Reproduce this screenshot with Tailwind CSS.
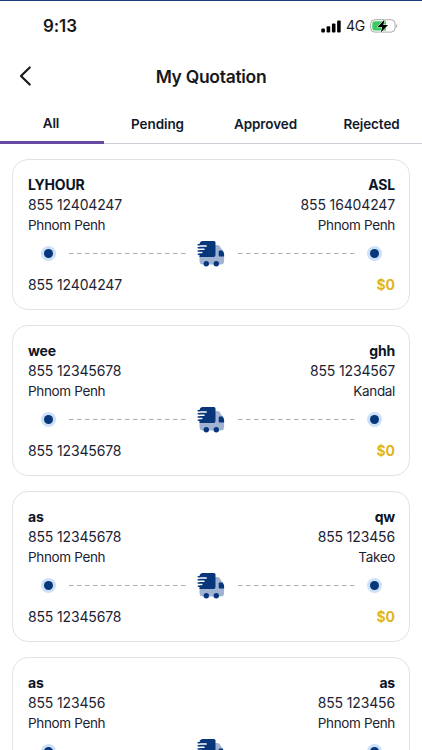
<!DOCTYPE html>
<html lang="en">
  <head>
    <meta charset="UTF-8" />
    <meta name="viewport" content="width=device-width, initial-scale=1.0" />
    <title>My Quotation</title>
    <script src="https://cdn.jsdelivr.net/npm/@tailwindcss/browser@4"></script>
  </head>
  <body
    class="h-[750px] overflow-hidden bg-white font-['Inter',sans-serif] text-[14px] leading-5 text-[#1c2233]"
  >
    <header class="border-t-1 border-[#1f3d7c] text-[#17181c]">
      <!-- status bar -->
      <div class="flex h-[50px] items-center justify-between pr-[24px] pl-[43px]">
        <span class="text-[17px] font-semibold tracking-[-0.1px]">9:13</span>
        <div class="flex items-center">
          <svg class="h-[13px] w-5" viewBox="0 0 20 13" fill="#000">
            <rect x="0.3" y="8.5" width="3.6" height="4" rx="1" />
            <rect x="5.6" y="6.3" width="3.6" height="6.2" rx="1" />
            <rect x="10.9" y="3.6" width="3.6" height="8.9" rx="1" />
            <rect x="16.1" y="0.5" width="3.6" height="12" rx="1" />
          </svg>
          <span class="ml-[5px] text-[14px] tracking-[-0.2px]">4G</span>
          <svg class="ml-[5px] h-[14px] w-7" viewBox="0 0 28 14">
            <rect x="0.7" y="0.7" width="24.4" height="12.4" rx="4" fill="#fff" stroke="#a9a9a9" />
            <path d="M4.5 2.3H16v9.2H4.5a2.2 2.2 0 0 1-2.2-2.2V4.5a2.2 2.2 0 0 1 2.2-2.2z" fill="#3fc965" />
            <path d="M26.2 4.9v4.2c1.5-.8 1.5-3.4 0-4.2z" fill="#a9a9a9" />
            <path d="M14.6.4 7.5 7.9h4.6l-1.2 5.7L18 6h-4.7z" fill="#000" stroke="#fff" stroke-width="1" paint-order="stroke" />
          </svg>
        </div>
      </div>
      <div class="grid h-[50px] grid-cols-[1fr_auto_1fr] items-center px-[18px]">
        <svg class="size-6" viewBox="0 0 24 24" fill="none" stroke="#17181c" stroke-width="2.2" stroke-linecap="round" stroke-linejoin="round">
          <path d="M11.7 3.5 3 12l8.7 8.5" />
        </svg>
        <h1 class="pt-px text-[17.5px] font-semibold tracking-[-0.3px]">My Quotation</h1>
      </div>
    </header>
    <nav
      class="grid h-[43px] grid-cols-[103px_109px_107px_103px] border-b border-[#cfccd6] text-center text-[13.5px] font-semibold tracking-[-0.1px] text-[#121a2b]"
    >
      <a class="-mr-px -mb-px rounded-tr-xs border-b-3 border-[#654aa1] pt-[12px] pr-[2px]">All</a>
      <a class="pt-[13px]">Pending</a>
      <a class="pt-[13px]">Approved</a>
      <a class="pt-[13px] pl-[2px]">Rejected</a>
    </nav>
    <main id="list" class="flex flex-col gap-[15px] px-3 pt-[15px]"></main>

    <svg class="hidden">
      <symbol id="truck" viewBox="0 0 28 28">
        <path d="M2.500 16H18V5h2.200c1.200 0 2.100.5 2.700 1.500l3.400 5.300c.5.800.8 1.600.8 2.500v6.700a3.500 3.500 0 0 1-3.500 3.500H6A3.500 3.500 0 0 1 2.500 21z" fill="#a1b3d3" />
        <path d="M6 1h11A1.500 1.500 0 0 1 18.500 2.500V15a2 2 0 0 1-2 2h-14V4.500A3.500 3.500 0 0 1 6 1z" fill="#07367a" />
        <path d="M22.700 10.500h2.800l.8 1.300c.5.800.8 1.600.8 2.500V16.500h-4.400a1 1 0 0 1-1-1v-4a1 1 0 0 1 1-1z" fill="#07367a" />
        <g stroke="#fff" stroke-linecap="round" stroke-width="1.500">
          <path d="M2.200 6H9.200M2.200 9.300H7M2.200 12.600H4.800" />
        </g>
        <g stroke="#07367a" stroke-linecap="round" stroke-width="1.500">
          <path d="M1.200 4.700H2.500M1.200 7.700H2.500M1.200 11H2.500M1.400 14.200H2.500" />
        </g>
        <circle cx="9.300" cy="23.700" r="2.700" fill="#07367a" />
        <circle cx="19.300" cy="23.700" r="2.700" fill="#07367a" />
      </symbol>
    </svg>

    <script>
      const quotations = [
        { from: ["LYHOUR", "855 12404247", "Phnom Penh"], to: ["ASL", "855 16404247", "Phnom Penh"] },
        { from: ["wee", "855 12345678", "Phnom Penh"], to: ["ghh", "855 1234567", "Kandal"] },
        { from: ["as", "855 12345678", "Phnom Penh"], to: ["qw", "855 123456", "Takeo"] },
        { from: ["as", "855 123456", "Phnom Penh"], to: ["as", "855 123456", "Phnom Penh"] },
      ];

      const dot = `<span class="flex size-[15px] items-center justify-center rounded-full bg-[#cce1f8]"><span class="size-[9px] rounded-full bg-[#07367a]"></span></span>`;
      const dashes = `<svg class="h-px w-[117px]"><path d="M0 .5H117" stroke="#adadad" stroke-dasharray="4.5 3.5" /></svg>`;

      const contact = ([name, phone, city]) => `
              <h2 class="font-bold tracking-[-0.2px] text-[#0c1426]">${name}</h2>
              <p class="tracking-[-0.15px]">${phone}</p>
              <p class="text-[13.5px] tracking-[-0.35px]">${city}</p>`;

      document.getElementById("list").innerHTML = quotations
        .map(
          ({ from, to }) => `
        <article class="h-[151px] shrink-0 rounded-2xl border border-[#e3e3e5] pt-[15px] pr-[14px] pl-[15px]">
          <div class="flex justify-between">
            <div>${contact(from)}</div>
            <div class="text-right">${contact(to)}</div>
          </div>
          <div class="flex h-10 items-start pt-[4px] pr-[13px] pl-[13px]">
            <div class="flex h-[28px] w-full items-center justify-between">
              ${dot}${dashes}
              <svg class="-ml-px mt-[2px] size-7"><use href="#truck" /></svg>
              ${dashes}${dot}
            </div>
          </div>
          <div class="flex justify-between">
            <p class="tracking-[-0.15px]">${from[1]}</p>
            <p class="font-bold text-[#dfb51f]">$0</p>
          </div>
        </article>`
        )
        .join("");
    </script>
  </body>
</html>
